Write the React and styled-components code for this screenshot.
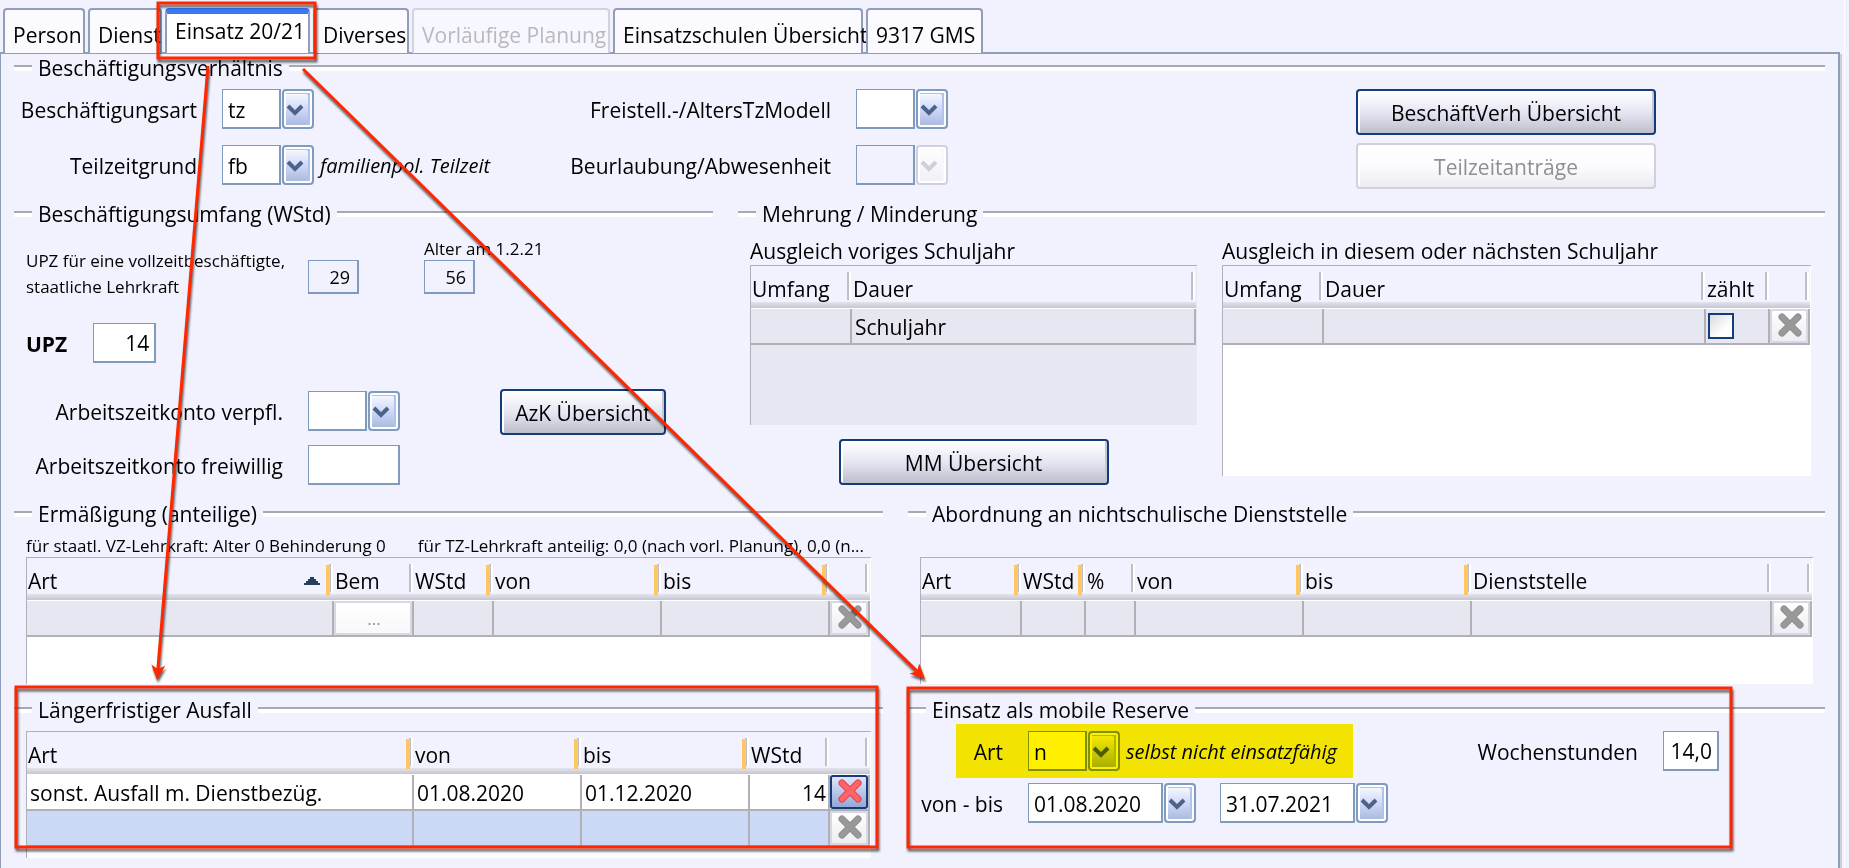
import React, { useState } from 'react';
import styled, { createGlobalStyle, css } from 'styled-components';

const tabs = [
  { id: 'person', label: 'Person', width: 82 },
  { id: 'dienst', label: 'Dienst', width: 74 },
  { id: 'einsatz', label: 'Einsatz 20/21', width: 145 },
  { id: 'diverses', label: 'Diverses', width: 96 },
  { id: 'planung', label: 'Vorläufige Planung', width: 198, disabled: true },
  { id: 'schulen', label: 'Einsatzschulen Übersicht', width: 250 },
  { id: 'gms', label: '9317 GMS', width: 117 },
];

const Combo = ({ id, value = '', width = 92, disabled, label }) => (
  <ComboBox $width={width}>
    <ComboSelect id={id} defaultValue={value} disabled={disabled} aria-label={label}>
      <option value={value}>{value}</option>
    </ComboSelect>
    <ArrowSlot>
      <ArrowFace $disabled={disabled}>
        <svg width="18" height="12" viewBox="0 0 18 12" aria-hidden="true">
          <path d="M2 2L9 9L16 2" fill="none" strokeWidth="4" />
        </svg>
      </ArrowFace>
    </ArrowSlot>
  </ComboBox>
);

const DeleteButton = ({ active }) => (
  <IconButton type="button" disabled={!active} aria-label="Zeile löschen">
    <svg width="26" height="26" viewBox="0 0 26 26" fill="none" strokeLinecap="round" aria-hidden="true">
      <path d="M5 5L21 21M21 5L5 21" stroke={active ? '#e8404a' : '#8f8f8f'} strokeWidth="7" />
      <path d="M5 5L21 21M21 5L5 21" stroke={active ? '#ff6468' : '#999'} strokeWidth="5" />
    </svg>
  </IconButton>
);

const Group = ({ title, children }) => (
  <GroupBox>
    <GroupTitle>{title}</GroupTitle>
    {children}
  </GroupBox>
);

const DataTable = ({ label, columns, rows, height, muted }) => (
  <TableFrame $height={height} $muted={muted}>
    <Table aria-label={label}>
      <colgroup>
        {columns.map((col, i) => (
          <Col key={i} $width={col.width} />
        ))}
      </colgroup>
      <thead>
        <tr>
          {columns.map((col, i) => (
            <Th key={i} $marked={col.marked}>
              <ThInner>
                {col.title}
                {col.sorted && (
                  <svg width="18" height="10" viewBox="0 0 18 10" aria-hidden="true">
                    <path d="M1 9V7h2V5h2V3h2V1h4v2h2v2h2v2h2v2z" fill="#24405a" />
                  </svg>
                )}
              </ThInner>
            </Th>
          ))}
        </tr>
      </thead>
      <tbody>
        {rows.map((row, i) => (
          <tr key={i}>
            {row.cells.map((cell, j) => (
              <Td key={j} $tone={row.tone} $control={typeof cell === 'object'} $right={columns[j].right}>
                {cell}
              </Td>
            ))}
          </tr>
        ))}
      </tbody>
    </Table>
  </TableFrame>
);

const Arrow = ({ x1, y1, x2, y2 }) => {
  const angle = (Math.atan2(y2 - y1, x2 - x1) * 180) / Math.PI;
  return (
    <g>
      <line x1={x1} y1={y1} x2={x2} y2={y2} stroke="#ff2600" strokeWidth="3" strokeDasharray={`${Math.hypot(x2 - x1, y2 - y1) - 8} 20`} />
      <path d="M0 0L-15 -7L-11 0L-15 7Z" fill="#ff2600" transform={`translate(${x2} ${y2}) rotate(${angle})`} />
    </g>
  );
};

const App = () => {
  const [activeTab, setActiveTab] = useState('einsatz');

  return (
    <>
      <GlobalStyle />
      <Page>
        <TabBar role="tablist">
          {tabs.map((tab) => (
            <Tab
              key={tab.id}
              type="button"
              role="tab"
              aria-selected={tab.id === activeTab}
              disabled={tab.disabled}
              $width={tab.width}
              $active={tab.id === activeTab}
              onClick={() => setActiveTab(tab.id)}
            >
              {tab.label}
            </Tab>
          ))}
        </TabBar>

        <Panel>
          <Group title="Beschäftigungsverhältnis">
            <RelationGrid>
              <Label htmlFor="art">Beschäftigungsart</Label>
              <Combo id="art" value="tz" />
              <Label htmlFor="freistell">Freistell.-/AltersTzModell</Label>
              <Combo id="freistell" />
              <ButtonStack>
                <PushButton type="button">BeschäftVerh Übersicht</PushButton>
                <PushButton type="button" disabled>
                  Teilzeitanträge
                </PushButton>
              </ButtonStack>
              <Label htmlFor="grund">Teilzeitgrund</Label>
              <Inline>
                <Combo id="grund" value="fb" />
                <Note>familienpol. Teilzeit</Note>
              </Inline>
              <Label htmlFor="beurlaubung">Beurlaubung/Abwesenheit</Label>
              <Combo id="beurlaubung" disabled />
            </RelationGrid>
          </Group>

          <Split $left={699} $right={1087}>
            <Group title="Beschäftigungsumfang (WStd)">
              <ScopeBody>
                <ScopeRow>
                  <SmallLabel htmlFor="upzVoll">
                    UPZ für eine vollzeitbeschäftigte, staatliche Lehrkraft
                  </SmallLabel>
                  <SmallField id="upzVoll" defaultValue="29" readOnly />
                  <AgeBox>
                    <AgeLabel htmlFor="alter">Alter am 1.2.21</AgeLabel>
                    <SmallField id="alter" defaultValue="56" readOnly />
                  </AgeBox>
                </ScopeRow>
                <UpzRow>
                  <Label htmlFor="upz" $bold>
                    UPZ
                  </Label>
                  <Field id="upz" defaultValue="14" $width={63} $right />
                </UpzRow>
                <AccountRow>
                  <AccountGrid>
                    <Label htmlFor="azkVerpfl">Arbeitszeitkonto verpfl.</Label>
                    <Combo id="azkVerpfl" />
                    <Label htmlFor="azkFrei">Arbeitszeitkonto freiwillig</Label>
                    <Field id="azkFrei" $width={92} />
                  </AccountGrid>
                  <PushButton type="button" $width={166}>
                    AzK Übersicht
                  </PushButton>
                </AccountRow>
              </ScopeBody>
            </Group>

            <Group title="Mehrung / Minderung">
              <BalanceBody>
                <BalanceColumn>
                  <Caption>Ausgleich voriges Schuljahr</Caption>
                  <DataTable
                    label="Ausgleich voriges Schuljahr"
                    height={160}
                    muted
                    columns={[{ title: 'Umfang', width: 101 }, { title: 'Dauer' }]}
                    rows={[{ tone: 'muted', cells: ['', 'Schuljahr'] }]}
                  />
                  <Centered>
                    <PushButton type="button" $width={270}>
                      MM Übersicht
                    </PushButton>
                  </Centered>
                </BalanceColumn>
                <BalanceColumn>
                  <Caption>Ausgleich in diesem oder nächsten Schuljahr</Caption>
                  <DataTable
                    label="Ausgleich in diesem oder nächsten Schuljahr"
                    height={211}
                    columns={[
                      { title: 'Umfang', width: 101 },
                      { title: 'Dauer' },
                      { title: 'zählt', width: 64 },
                      { title: '', width: 40 },
                    ]}
                    rows={[
                      {
                        tone: 'muted',
                        cells: ['', '', <Check key="c" type="checkbox" aria-label="zählt" />, <DeleteButton key="d" />],
                      },
                    ]}
                  />
                </BalanceColumn>
              </BalanceBody>
            </Group>
          </Split>

          <Split $left={869} $right={917}>
            <Group title="Ermäßigung (anteilige)">
              <Inset>
                <Hints>
                  <Hint>für staatl. VZ-Lehrkraft: Alter 0 Behinderung 0</Hint>
                  <Hint>für TZ-Lehrkraft anteilig: 0,0 (nach vorl. Planung), 0,0 (n...</Hint>
                </Hints>
                <DataTable
                  label="Ermäßigung"
                  height={127}
                  columns={[
                    { title: 'Art', sorted: true, marked: true },
                    { title: 'Bem', width: 80 },
                    { title: 'WStd', width: 80, marked: true },
                    { title: 'von', width: 168, marked: true },
                    { title: 'bis', width: 168, marked: true },
                    { title: '', width: 40 },
                  ]}
                  rows={[
                    {
                      tone: 'muted',
                      cells: [
                        '',
                        <MoreButton key="m" type="button" disabled>
                          ...
                        </MoreButton>,
                        '',
                        '',
                        '',
                        <DeleteButton key="d" />,
                      ],
                    },
                  ]}
                />
              </Inset>
            </Group>
            <Group title="Abordnung an nichtschulische Dienststelle">
              <Inset>
                <Hints />
                <DataTable
                  label="Abordnung"
                  height={127}
                  columns={[
                    { title: 'Art', width: 101, marked: true },
                    { title: 'WStd', width: 64, marked: true },
                    { title: '%', width: 50 },
                    { title: 'von', width: 168, marked: true },
                    { title: 'bis', width: 168, marked: true },
                    { title: 'Dienststelle' },
                    { title: '', width: 40 },
                  ]}
                  rows={[{ tone: 'muted', cells: ['', '', '', '', '', '', <DeleteButton key="d" />] }]}
                />
              </Inset>
            </Group>
          </Split>

          <Split $left={869} $right={917}>
            <Group title="Längerfristiger Ausfall">
              <Inset $top={7}>
                <DataTable
                  label="Längerfristiger Ausfall"
                  height={127}
                  columns={[
                    { title: 'Art', marked: true },
                    { title: 'von', width: 168, marked: true },
                    { title: 'bis', width: 168, marked: true },
                    { title: 'WStd', width: 80, right: true },
                    { title: '', width: 40 },
                  ]}
                  rows={[
                    {
                      cells: [
                        'sonst. Ausfall m. Dienstbezüg.',
                        '01.08.2020',
                        '01.12.2020',
                        '14',
                        <DeleteButton key="d" active />,
                      ],
                    },
                    { tone: 'selected', cells: ['', '', '', '', <DeleteButton key="d" />] },
                  ]}
                />
              </Inset>
            </Group>
            <Group title="Einsatz als mobile Reserve">
              <Inset>
                <ReserveRow>
                  <Marked>
                    <ReserveLabel htmlFor="reserveArt" $width={47}>
                      Art
                    </ReserveLabel>
                    <Combo id="reserveArt" value="n" />
                    <Note>selbst nicht einsatzfähig</Note>
                  </Marked>
                  <HoursBox>
                    <Label htmlFor="stunden">Wochenstunden</Label>
                    <Field id="stunden" defaultValue="14,0" $width={56} $right />
                  </HoursBox>
                </ReserveRow>
                <PeriodRow>
                  <ReserveLabel htmlFor="von" $width={83}>
                    von - bis
                  </ReserveLabel>
                  <Combo id="von" value="01.08.2020" width={168} />
                  <Combo id="bis" value="31.07.2021" width={168} label="bis" />
                </PeriodRow>
              </Inset>
            </Group>
          </Split>
        </Panel>

        <Annotations width="1849" height="868" viewBox="0 0 1849 868" aria-hidden="true">
          <g fill="none" stroke="#ff2600" strokeWidth="3">
            <rect x="158" y="3" width="157" height="55" />
            <rect x="16" y="687" width="861" height="160" />
            <rect x="908" y="688" width="823" height="159" />
          </g>
          <Arrow x1={208} y1={66} x2={157} y2={680} />
          <Arrow x1={303} y1={69} x2={925} y2={679} />
        </Annotations>
      </Page>
    </>
  );
};

export default App;

const GlobalStyle = createGlobalStyle`
  * {
    box-sizing: border-box;
  }

  body {
    margin: 0;
    background: #f2f2ff;
    overflow-x: hidden;
  }

  body, button, input, select {
    font-family: 'Open Sans', 'Noto Sans', sans-serif;
    font-size: 21px;
    line-height: 28px;
    color: #000;
  }
`;

const Page = styled.div`
  display: flex;
  flex-direction: column;
  position: relative;
  min-height: 100vh;
  padding: 8px 9px 0 0;
  background: linear-gradient(#fff, #fff) no-repeat right 4px top / 1px 100% #f2f2ff;
`;

const TabBar = styled.div`
  display: flex;
  gap: 3px;
  height: 45px;
  padding-left: 3px;
  margin-bottom: -1px;
`;

const Tab = styled.button`
  flex: none;
  position: relative;
  width: ${(props) => props.$width}px;
  padding: 6px 0 0 8px;
  border: 2px solid #8f9fb9;
  border-bottom: 0;
  border-radius: 4px 4px 0 0;
  background: #fafaff;
  text-align: left;
  white-space: nowrap;

  &:disabled {
    border-color: #d3d3e0;
    background: #f7f7ff;
    color: #b9b9bd;
  }

  ${(props) =>
    props.$active &&
    css`
      padding: 0 0 6px 8px;
      border-top: 6px solid #3b78f5;
      background: #fff;
    `}
`;

const Panel = styled.main`
  flex: 1;
  padding: 0 13px 10px;
  border: solid #8f9fb9;
  border-width: 2px 2px 0 1px;
  box-shadow: 2px 2px 0 #cfcfdf;
`;

const Split = styled.div`
  display: grid;
  grid-template-columns: minmax(0, ${(props) => props.$left}fr) minmax(0, ${(props) => props.$right}fr);
  gap: 25px;
`;

const GroupBox = styled.section`
  min-width: 0;
`;

const GroupTitle = styled.h2`
  display: flex;
  align-items: center;
  gap: 6px;
  height: 28px;
  margin: 0;
  font-size: 21px;
  font-weight: 400;
  line-height: 26px;
  white-space: nowrap;

  &::before,
  &::after {
    content: '';
    width: 18px;
    height: 4px;
    border-top: 2px solid #a8a8b2;
    background: #fff;
  }

  &::after {
    flex: 1;
  }
`;

const RelationGrid = styled.div`
  display: grid;
  grid-template-columns: 183px 334fr 250px 475fr 300px 144fr;
  grid-template-rows: 40px 40px;
  gap: 16px 25px;
  padding: 7px 0 15px;
`;

const ButtonStack = styled.div`
  display: flex;
  flex-direction: column;
  gap: 8px;
  grid-column: 5 / 7;
  grid-row: 1 / 3;
  width: 300px;
`;

const Label = styled.label`
  align-self: center;
  justify-self: end;
  padding-top: 2px;
  font-weight: ${(props) => (props.$bold ? 700 : 400)};
  white-space: nowrap;
`;

const Note = styled.span`
  padding-top: 2px;
  font-size: 20px;
  font-style: italic;
  white-space: nowrap;
`;

const Inline = styled.div`
  display: flex;
  align-items: center;
  gap: 6px;
`;

const fieldBorder = css`
  border: solid #7f99bf;
  border-width: 1px 2px 2px 1px;
  border-radius: 0;
  outline: 0;
`;

const Field = styled.input`
  ${fieldBorder}
  width: ${(props) => props.$width}px;
  height: 40px;
  padding: 0 5px;
  background: #fff;
  text-align: ${(props) => (props.$right ? 'right' : 'left')};
`;

const SmallField = styled.input`
  ${fieldBorder}
  width: 51px;
  height: 34px;
  padding: 0 7px;
  background: transparent;
  font-size: 18px;
  text-align: right;
`;

const ComboBox = styled.div`
  display: grid;
  flex: none;
  width: ${(props) => props.$width}px;
  height: 40px;
`;

const ComboSelect = styled.select`
  ${fieldBorder}
  grid-area: 1 / 1;
  appearance: none;
  width: 100%;
  padding: 2px 5px 0;
  background: #fff;

  &:disabled {
    background: #f2f2ff;
    opacity: 1;
  }
`;

const ArrowSlot = styled.span`
  grid-area: 1 / 1;
  justify-self: end;
  width: 35px;
  padding-left: 1px;
  border-left: 2px solid #7f99bf;
  background: #f2f2ff;
  pointer-events: none;
`;

const ArrowFace = styled.span`
  display: flex;
  align-items: center;
  justify-content: center;
  height: 100%;
  padding: 2px 7px 0 1px;
  border: 2px solid ${(props) => (props.$disabled ? '#d0d0de' : '#809bc0')};
  border-radius: 4px;
  background: ${(props) =>
    props.$disabled ? 'linear-gradient(#fff, #efeff5)' : 'linear-gradient(#fdfdff, #d3ddfa 45%, #a6b6dc)'};
  box-shadow: inset 0 0 0 2px #fff, inset -4px 3px 0 ${(props) => (props.$disabled ? '#f8f8fc' : '#b3c2e8')};

  path {
    stroke: ${(props) => (props.$disabled ? '#cfcfdb' : '#4c6288')};
  }
`;

const PushButton = styled.button`
  flex: none;
  width: ${(props) => (props.$width ? `${props.$width}px` : '100%')};
  height: 46px;
  padding: 2px 0 0;
  border: 2px solid #143c78;
  border-radius: 4px;
  background: linear-gradient(#fff, #e6e6f4 50%, #bebecb);
  box-shadow: inset 2px 1px 0 #fff, inset -2px 0 0 #c6c6d4;
  white-space: nowrap;

  &:disabled {
    border-color: #d0d0dc;
    background: linear-gradient(#fff, #fcfcfe 50%, #ebebf2);
    box-shadow: inset 2px 1px 0 #fff;
    color: #8f8f8f;
  }
`;

const ScopeBody = styled.div`
  padding: 12px 0 15px 12px;
`;

const ScopeRow = styled.div`
  display: flex;
  align-items: flex-end;
  height: 60px;
  padding-bottom: 6px;
`;

const SmallLabel = styled.label`
  align-self: flex-start;
  width: 282px;
  padding-top: 8px;
  font-size: 17px;
  line-height: 26px;
`;

const AgeBox = styled.div`
  display: flex;
  flex-direction: column;
  margin-left: 65px;
`;

const AgeLabel = styled.label`
  font-size: 17px;
  line-height: 22px;
  white-space: nowrap;
`;

const UpzRow = styled.div`
  display: flex;
  gap: 26px;
  padding: 23px 0 26px;
`;

const AccountRow = styled.div`
  display: flex;
  gap: 100px;
`;

const AccountGrid = styled.div`
  display: grid;
  grid-template-columns: 257px 92px;
  gap: 14px 25px;
  padding-top: 2px;
`;

const BalanceBody = styled.div`
  display: grid;
  grid-template-columns: minmax(0, 447fr) minmax(0, 589fr);
  gap: 25px;
  padding: 9px 14px 0 12px;
`;

const BalanceColumn = styled.div`
  min-width: 0;
`;

const Caption = styled.div`
  height: 28px;
  white-space: nowrap;
`;

const Centered = styled.div`
  display: flex;
  justify-content: center;
  padding-top: 14px;
`;

const Inset = styled.div`
  padding: ${(props) => props.$top || 0}px 12px 0;
`;

const Hints = styled.div`
  display: flex;
  gap: 32px;
  height: 29px;
  padding-top: 7px;
`;

const Hint = styled.span`
  font-size: 17px;
  line-height: 22px;
  white-space: nowrap;
`;

const TableFrame = styled.div`
  height: ${(props) => props.$height}px;
  padding-right: 1px;
  margin-bottom: ${(props) => (props.$height === 127 ? 12 : 0)}px;
  border: solid #b0b0b8;
  border-width: 1px 0 0 1px;
  background: ${(props) => (props.$muted ? '#e7e7f1' : '#fff')};
`;

const Table = styled.table`
  width: 100%;
  table-layout: fixed;
  border-collapse: separate;
  border-spacing: 0;
`;

const Col = styled.col`
  width: ${(props) => (props.$width ? `${props.$width}px` : 'auto')};
`;

const Th = styled.th`
  height: 43px;
  padding: 3px 7px 0 1px;
  background:
    linear-gradient(${(props) => (props.$marked ? '#ffc662, #ffc662' : 'transparent, transparent')}) no-repeat right 4px
      top 7px / 4px 30px,
    linear-gradient(#fff, #fff) no-repeat right 1px top 6px / 2px 28px,
    linear-gradient(#bfbfc9, #bfbfc9) no-repeat right 3px top 6px / 2px 28px,
    linear-gradient(#e3e3ee, #c6c6d2 85%, #fff 86%) no-repeat left bottom / 100% 7px,
    #f2f2ff;
  font-weight: 400;
  text-align: left;
  white-space: nowrap;
`;

const ThInner = styled.span`
  display: flex;
  align-items: center;
  justify-content: space-between;

  svg {
    margin-right: 6px;
  }
`;

const tones = { muted: '#e7e7f1', selected: '#ccd9f6' };

const Td = styled.td`
  height: 36px;
  padding: ${(props) => (props.$control ? 0 : '1px 2px 0 3px')};
  border: solid #b0b0b6;
  border-width: 0 2px 2px 0;
  background: ${(props) => tones[props.$tone] || '#fff'};
  text-align: ${(props) => (props.$right ? 'right' : 'left')};
  white-space: nowrap;
`;

const IconButton = styled.button`
  display: flex;
  align-items: center;
  justify-content: center;
  width: 100%;
  height: 34px;
  padding: 0 0 2px 2px;
  border: 2px solid #143c78;
  border-radius: 3px;
  background: linear-gradient(#dfe6fc, #93a8d8);

  &:disabled {
    border-color: #d8d8e2;
    background: linear-gradient(#fff, #ededf3);
  }
`;

const MoreButton = styled(IconButton)`
  font-size: 17px;

  &:disabled {
    padding-top: 4px;
    background: linear-gradient(#fff, #f8f8fc);
    color: #8f8f8f;
  }
`;

const Check = styled.input`
  appearance: none;
  display: block;
  width: 26px;
  height: 26px;
  margin: 0 0 0 2px;
  border: 2px solid #143c78;
  background: linear-gradient(135deg, #dcdce0, #fff 70%);
`;

const ReserveRow = styled.div`
  display: flex;
  justify-content: space-between;
  padding: 0 94px 0 36px;
`;

const ReserveLabel = styled.label`
  width: ${(props) => props.$width}px;
  margin-right: 19px;
  padding-top: 2px;
  text-align: right;
  white-space: nowrap;
`;

const Marked = styled.div`
  display: flex;
  align-items: center;
  gap: 6px;
  position: relative;
  width: 397px;
  padding: 7px 0;

  /* text marker laid over the row */
  &::after {
    content: '';
    position: absolute;
    inset: 0;
    background: #fff000;
    mix-blend-mode: multiply;
    pointer-events: none;
  }
`;

const HoursBox = styled.div`
  display: flex;
  align-items: center;
  gap: 25px;
`;

const PeriodRow = styled.div`
  display: flex;
  align-items: center;
  padding-top: 5px;

  ${ReserveLabel} {
    margin-right: 25px;
  }

  ${ComboBox} + ${ComboBox} {
    margin-left: 24px;
  }
`;

const Annotations = styled.svg`
  position: absolute;
  top: 0;
  left: 0;
  pointer-events: none;
  filter: drop-shadow(1px 3px 1px rgba(0, 0, 0, 0.6));
`;
